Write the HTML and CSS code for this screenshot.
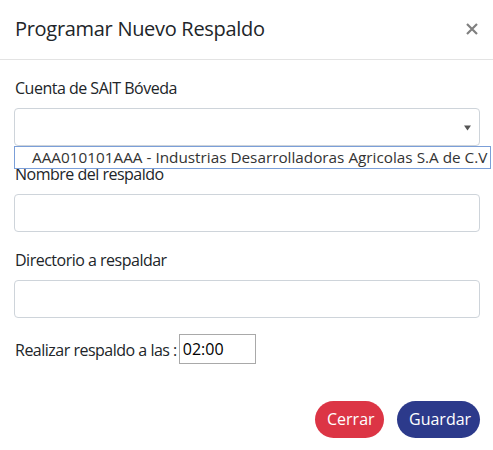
FILE: index.html
```html
<!DOCTYPE html>
<html lang="es">
<head>
<meta charset="utf-8">
<title>Programar Nuevo Respaldo</title>
<link rel="stylesheet" href="styles.css">
</head>
<body>
<div class="modal">
  <div class="modal-header">
    <h5 class="modal-title">Programar Nuevo Respaldo</h5>
    <button class="close" type="button" aria-label="Close">
      <svg width="12" height="12" viewBox="0 0 12 12"><path d="M1 1L11 11M11 1L1 11" stroke="#808080" stroke-width="2.2" fill="none"/></svg>
    </button>
  </div>
  <div class="modal-body">
    <div class="form-group select-group">
      <label class="label">Cuenta de SAIT Bóveda</label>
      <div class="form-control select">
        <svg class="caret" width="7" height="6" viewBox="0 0 7 6"><path d="M0 0.5H7L3.5 5.5Z" fill="#555"/></svg>
      </div>
      <div class="option">AAA010101AAA - Industrias Desarrolladoras Agricolas S.A de C.V</div>
    </div>
    <div class="form-group">
      <label class="label">Nombre del respaldo</label>
      <input class="form-control" type="text">
    </div>
    <div class="form-group">
      <label class="label">Directorio a respaldar</label>
      <input class="form-control" type="text">
    </div>
    <div class="time-row">
      <span class="time-label">Realizar respaldo a las :</span><input class="time-input" type="text" value="02:00">
    </div>
  </div>
  <div class="modal-footer">
    <button class="btn btn-danger" type="button">Cerrar</button>
    <button class="btn btn-primary" type="button">Guardar</button>
  </div>
</div>
</body>
</html>
```
FILE: styles.css
```css
* { box-sizing: border-box; }
html, body { margin: 0; padding: 0; background: #fff; }
body {
  font-family: "Open Sans", "Noto Sans", sans-serif;
  font-size: 16px;
  line-height: 24px;
  color: #212529;
  width: 493px;
  height: 450px;
  overflow: hidden;
}
.modal { width: 493px; }
.modal-header {
  height: 60px;
  display: flex;
  align-items: center;
  justify-content: space-between;
  padding: 0 14px 0 15px;
  border-bottom: 1px solid #e3e3e3;
}
.modal-title {
  margin: 0 0 2px 0;
  font-size: 20px;
  font-weight: 500;
  letter-spacing: -0.3px;
  line-height: 30px;
  color: #212529;
}
.close {
  border: 0;
  background: none;
  padding: 0;
  width: 12px;
  height: 12px;
  margin-right: 1px;
  margin-bottom: 2px;
  display: flex;
}
.modal-body { padding: 16px 13px 0 14px; }
.form-group { margin-bottom: 16px; position: relative; }
.label { display: block; margin-bottom: 8px; line-height: 24px; padding-left: 1px; letter-spacing: -0.5px; }
.form-control {
  display: block;
  width: 100%;
  height: 38px;
  border: 1px solid #ced4da;
  border-radius: 4px;
  background: #fff;
  font: inherit;
  padding: 6px 12px;
}
.select { position: relative; display: flex; align-items: center; justify-content: flex-end; padding-right: 8px; }
.caret { display: block; margin-top: 2px; }
.option {
  position: absolute;
  left: 0;
  top: 70px;
  width: 477px;
  height: 23px;
  border: 1px solid #7b9fd8;
  background: #fff;
  padding-left: 17px;
  line-height: 20px;
  font-size: 15.3px;
  color: #333;
  white-space: nowrap;
  z-index: 2;
}
.time-row { display: flex; align-items: center; height: 30px; padding-left: 1px; }
.time-label { line-height: 24px; margin-top: 2px; letter-spacing: -0.5px; }
.time-input {
  width: 77px;
  height: 30px;
  border: 1px solid #a9a9a9;
  border-radius: 0;
  font: inherit;
  color: #000;
  padding: 0 3px;
  margin-left: 2px;
}
.modal-footer {
  display: flex;
  justify-content: flex-end;
  gap: 13px;
  padding: 37px 13px 0 0;
}
.btn {
  height: 37px;
  border: 0;
  border-radius: 19px;
  color: #fff;
  font: inherit;
  padding: 0 12px;
  line-height: 37px;
}
.btn-danger { background: #dc3545; width: 69px; }
.btn-primary { background: #2c3a8b; width: 83px; }
```
